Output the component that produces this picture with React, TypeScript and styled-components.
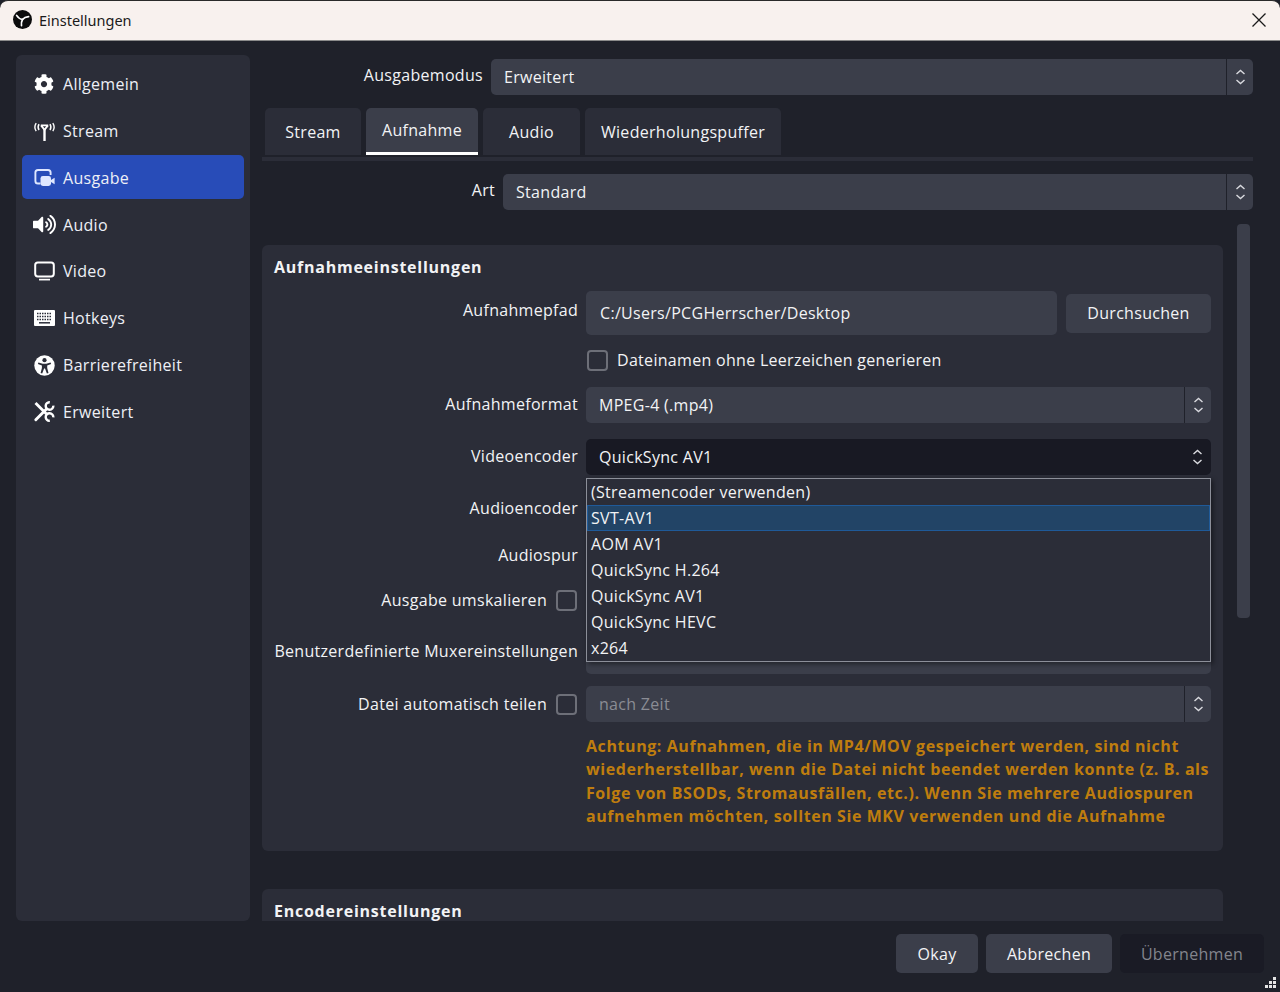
import React from 'react';
import styled, { createGlobalStyle } from 'styled-components';
import { FaCog, FaVolumeUp } from 'react-icons/fa';

const GlobalStyle = createGlobalStyle`
    html, body {
        margin: 0;
        padding: 0;
        background: #1f212a;
    }
    * {
        box-sizing: border-box;
    }
`;

const Window = styled.div`
    width: 1280px;
    height: 992px;
    display: flex;
    flex-direction: column;
    position: relative;
    overflow: hidden;
    background: #1f212a;
    color: #f2f3f5;
    font-family: "Open Sans", "Noto Sans", sans-serif;
    font-size: 16px;
    letter-spacing: 0.3px;
`;

const TitleBar = styled.div`
    height: 41px;
    flex: none;
    display: flex;
    align-items: center;
    padding: 0 13px 2px 13px;
    background: #f8f1ee;
    border-top: 1px solid #2a2a2a;
    border-bottom: 1px solid #8b8b8b;
    border-radius: 8px 8px 0 0;
    color: #1a1a1a;
    font-family: "Noto Sans", "Open Sans", sans-serif;
    font-size: 14.5px;
    letter-spacing: 0;
`;

const TitleText = styled.span`
    margin-left: 7px;
    flex: 1;
`;

const Content = styled.div`
    flex: 1;
    min-height: 0;
    display: flex;
    gap: 12px;
    padding: 14px 27px 0 16px;
`;

const Sidebar = styled.div`
    width: 234px;
    height: 866px;
    flex: none;
    display: flex;
    flex-direction: column;
    gap: 2.85px;
    padding: 6.5px 6px;
    background: #2b2d38;
    border-radius: 6px;
`;

const NavItem = styled.div<{ $active?: boolean }>`
    height: 44px;
    flex: none;
    display: flex;
    align-items: center;
    gap: 9px;
    padding: 1px 0 0 12px;
    border-radius: 5px;
    background: ${(p) => (p.$active ? '#284cb8' : 'transparent')};
    color: #eef0f6;
`;

const NavIcon = styled.span`
    width: 20px;
    height: 20px;
    flex: none;
    display: flex;
    align-items: center;
    justify-content: center;
    color: #fff;

    svg {
        flex: none;
    }
`;

const Main = styled.div`
    flex: 1;
    min-width: 0;
    height: 866px;
    display: flex;
    flex-direction: column;
`;

const TopRow = styled.div`
    height: 36px;
    flex: none;
    display: flex;
    align-items: center;
    gap: 8px;
    margin-top: 4px;
`;

const TopLabel = styled.div<{ $width: number }>`
    width: ${(p) => p.$width}px;
    flex: none;
    text-align: right;
    margin-top: -5px;
`;

const Select = styled.div<{ $open?: boolean; $disabled?: boolean }>`
    flex: 1;
    min-width: 0;
    height: 36px;
    display: flex;
    align-items: center;
    border-radius: 5px;
    background: ${(p) => (p.$open ? '#181923' : '#3b3e4a')};
    color: ${(p) => (p.$disabled ? '#8a8c94' : '#f2f3f5')};
`;

const SelectText = styled.div`
    flex: 1;
    padding-left: 13px;
    white-space: nowrap;
`;

const SelectArrows = styled.div<{ $open?: boolean }>`
    width: 27px;
    height: 100%;
    flex: none;
    display: flex;
    align-items: center;
    justify-content: center;
    border-left: ${(p) => (p.$open ? 'none' : '1px solid #1f212a')};
`;

const TabBar = styled.div`
    height: 53px;
    flex: none;
    display: flex;
    padding-left: 3px;
    margin-top: 13px;
    border-bottom: 4px solid #2b2d38;
`;

const Tab = styled.div<{ $active?: boolean; $width: number }>`
    width: ${(p) => p.$width}px;
    height: 47px;
    margin-right: 5px;
    display: flex;
    align-items: center;
    justify-content: center;
    border-radius: 5px 5px 0 0;
    background: ${(p) => (p.$active ? '#3b3e4a' : '#2b2d38')};
    border-bottom: ${(p) => (p.$active ? '3px solid #fff' : 'none')};
`;

const ArtRow = styled(TopRow)`
    margin-top: 13px;
`;

const ScrollArea = styled.div`
    flex: 1;
    min-height: 0;
    display: flex;
    gap: 14px;
    margin-top: 14px;
    overflow: hidden;
`;

const ScrollContent = styled.div`
    flex: 1;
    min-width: 0;
    padding-top: 21px;
`;

const ScrollTrack = styled.div`
    width: 13px;
    flex: none;
    margin-right: 3px;
`;

const ScrollThumb = styled.div`
    height: 394px;
    background: #3b3e4a;
    border-radius: 4px;
`;

const Group = styled.div`
    position: relative;
    height: 606px;
    padding: 12px 12px 0;
    background: #2b2d38;
    border-radius: 6px;
`;

const EncoderGroup = styled(Group)`
    height: 120px;
    margin-top: 38px;
`;

const GroupTitle = styled.div`
    height: 21px;
    line-height: 21px;
    font-weight: 700;
    font-size: 16px;
    letter-spacing: 0.75px;
`;

const Row = styled.div<{ $height: number; $top: number }>`
    height: ${(p) => p.$height}px;
    margin-top: ${(p) => p.$top}px;
    display: flex;
    align-items: center;
    gap: 8px;
`;

const Label = styled.div`
    width: 304px;
    flex: none;
    text-align: right;
    white-space: nowrap;
    margin-top: -3px;
`;

const PathLabel = styled(Label)`
    margin-top: -7px;
`;

const CheckLabel = styled.div`
    width: 304px;
    flex: none;
    display: flex;
    align-items: center;
    justify-content: flex-end;
    gap: 9px;
    white-space: nowrap;
    padding-right: 1px;
`;

const Field = styled.div`
    flex: 1;
    min-width: 0;
    display: flex;
    align-items: center;
    gap: 9px;
`;

const TextInput = styled.div`
    flex: 1;
    height: 44px;
    display: flex;
    align-items: center;
    padding-left: 14px;
    background: #3b3e4a;
    border-radius: 5px;
`;

const Button = styled.div<{ $width: number; $disabled?: boolean }>`
    width: ${(p) => p.$width}px;
    height: 39px;
    flex: none;
    display: flex;
    align-items: center;
    justify-content: center;
    border-radius: 5px;
    background: ${(p) => (p.$disabled ? '#1a1b25' : '#3b3e4a')};
    color: ${(p) => (p.$disabled ? '#83858d' : '#f2f3f5')};
`;

const Checkbox = styled.span`
    width: 21px;
    height: 21px;
    flex: none;
    border: 2px solid #6d6f78;
    border-radius: 4px;
`;

const FieldCheckbox = styled(Checkbox)`
    margin-left: 1px;
`;

const EmptyBar = styled.div`
    flex: 1;
    height: 100%;
    background: #3b3e4a;
    border-radius: 5px;
`;

const Warning = styled.div`
    margin: 13px 0 0 312px;
    color: #bf7d0e;
    font-weight: 700;
    font-size: 16px;
    letter-spacing: 0.58px;
    line-height: 23.4px;
    height: 94px;
    overflow: hidden;
    white-space: pre-line;
`;

const Popup = styled.div`
    position: absolute;
    left: 324px;
    top: 233px;
    width: 625px;
    height: 184px;
    background: #2b2d38;
    border: 1px solid #8c8f99;
    box-shadow: 2px 2px 5px rgba(0, 0, 0, 0.45);
`;

const PopupItem = styled.div<{ $active?: boolean }>`
    height: 26px;
    display: flex;
    align-items: center;
    padding-left: 4px;
    background: ${(p) => (p.$active ? '#224466' : 'transparent')};
    outline: ${(p) => (p.$active ? '1px solid #1f5a99' : 'none')};
    outline-offset: -1px;
`;

const Footer = styled.div`
    height: 71px;
    flex: none;
    display: flex;
    justify-content: flex-end;
    gap: 8px;
    padding: 13px 16px 0 0;
`;

const GripWrap = styled.div`
    position: absolute;
    right: 4px;
    bottom: 4px;
    width: 11px;
    height: 11px;
    line-height: 0;
`;

const ObsLogo = () => (
    <svg width="19" height="19" viewBox="0 0 19 19">
        <circle cx="9.5" cy="9.5" r="9.5" fill="#0c0c0c" />
        <path d="M3.6 5.4c1.6 2.6 3.4 3.7 5.9 4.1" stroke="#fff" strokeWidth="1.7" fill="none" strokeLinecap="round" />
        <path d="M15.6 6.6c-2.7.3-4.6 1.1-6.1 2.9" stroke="#fff" strokeWidth="1.7" fill="none" strokeLinecap="round" />
        <path d="M8.5 15.6c-.3-2.4 0-4.3 1-6.1" stroke="#fff" strokeWidth="1.7" fill="none" strokeLinecap="round" />
    </svg>
);

const CloseIcon = () => (
    <svg width="16" height="16" viewBox="0 0 16 16">
        <path d="M1.5 1.5l13 13M14.5 1.5l-13 13" stroke="#1a1a1a" strokeWidth="1.3" fill="none" />
    </svg>
);

const ArrowsIcon = () => (
    <svg width="11" height="18" viewBox="0 0 11 18">
        <path d="M1.5 6l4-3.5 4 3.5M1.5 12l4 3.5 4-3.5" stroke="#d8d9de" strokeWidth="1.4" fill="none" />
    </svg>
);

const StreamIcon = () => (
    <svg width="21" height="20" viewBox="0 0 21 20">
        <path d="M6.8 4.4h7.4M7 4.4l3.5 4.4 3.5-4.4" stroke="#fff" strokeWidth="1.8" fill="none" />
        <path d="M10.5 8v12" stroke="#fff" strokeWidth="2.4" />
        <path d="M5 3.2C3.9 5 3.9 7.2 5 9M16 3.2c1.1 1.8 1.1 4 0 5.8" stroke="#fff" strokeWidth="1.5" fill="none" />
        <path d="M2.2 2.2C.4 4.9.4 7.5 2.2 10.2M18.8 2.2c1.8 2.7 1.8 5.3 0 8" stroke="#fff" strokeWidth="1.4" fill="none" />
    </svg>
);

const OutputIcon = () => (
    <svg width="21" height="20" viewBox="0 0 21 20">
        <path d="M6.5 15.5H4a2.6 2.6 0 0 1-2.6-2.6V4.6A2.6 2.6 0 0 1 4 2h10a2.6 2.6 0 0 1 2.6 2.6V7" stroke="#dfe7ff" strokeWidth="1.9" fill="none" />
        <rect x="6.5" y="8" width="10.5" height="10" rx="2.4" fill="#dfe7ff" />
        <path d="M17 12l3.6-2.2v6.4L17 14z" fill="#dfe7ff" />
    </svg>
);

const MonitorIcon = () => (
    <svg width="21" height="20" viewBox="0 0 21 20">
        <rect x="1.2" y="1.4" width="18.6" height="14" rx="2.6" stroke="#fff" strokeWidth="2" fill="none" />
        <path d="M5 18.6h11" stroke="#fff" strokeWidth="1.7" />
    </svg>
);

const KeyboardIcon = () => (
    <svg width="21" height="16" viewBox="0 0 21 16">
        <rect width="21" height="16" rx="1" fill="#fff" />
        <path d="M3 3.5h15M3 6.5h15M3 9.5h15" stroke="#2b2d38" strokeWidth="1.5" strokeDasharray="1.5 1" />
        <path d="M5 12.8h11" stroke="#2b2d38" strokeWidth="1.5" />
    </svg>
);

const AccessIcon = () => (
    <svg width="21" height="21" viewBox="0 0 21 21">
        <circle cx="10.5" cy="10.5" r="10.2" fill="#fff" />
        <circle cx="10.5" cy="5.2" r="2.1" fill="#2b2d38" />
        <path d="M4.4 7.6l4.3 1.1h3.6l4.3-1.1.5 1.5-3.9 1.4v2.6l1.3 4.9-1.6.4-1.9-4.9h-.9l-1.9 4.9-1.6-.4 1.3-4.9v-2.6L3.9 9.1z" fill="#2b2d38" />
    </svg>
);

const ToolsIcon = () => (
    <svg width="22" height="21" viewBox="0 0 22 21">
        <path d="M2.5 2l11 11" stroke="#fff" strokeWidth="2.8" fill="none" />
        <path d="M13.5 8L2.8 18.7" stroke="#fff" strokeWidth="2.9" fill="none" strokeLinecap="round" />
        <path d="M20.3 4.7A3.8 3.8 0 1 1 16.8 1.2" stroke="#fff" strokeWidth="2.4" fill="none" />
        <path d="M16.8 19.8A3.8 3.8 0 1 1 20.3 16.3" stroke="#fff" strokeWidth="2.4" fill="none" />
    </svg>
);

const GripIcon = () => (
    <svg width="11" height="11" viewBox="0 0 11 11" fill="#e4e4e4">
        <rect x="8" y="0" width="3" height="3" />
        <rect x="4" y="4" width="3" height="3" />
        <rect x="8" y="4" width="3" height="3" />
        <rect x="0" y="8" width="3" height="3" />
        <rect x="4" y="8" width="3" height="3" />
        <rect x="8" y="8" width="3" height="3" />
    </svg>
);

const navItems = [
    { label: 'Allgemein', icon: <FaCog size={20} /> },
    { label: 'Stream', icon: <StreamIcon /> },
    { label: 'Ausgabe', icon: <OutputIcon />, active: true },
    { label: 'Audio', icon: <FaVolumeUp size={23} /> },
    { label: 'Video', icon: <MonitorIcon /> },
    { label: 'Hotkeys', icon: <KeyboardIcon /> },
    { label: 'Barrierefreiheit', icon: <AccessIcon /> },
    { label: 'Erweitert', icon: <ToolsIcon /> },
];

const encoders = [
    '(Streamencoder verwenden)',
    'SVT-AV1',
    'AOM AV1',
    'QuickSync H.264',
    'QuickSync AV1',
    'QuickSync HEVC',
    'x264',
];

const warningText = `Achtung: Aufnahmen, die in MP4/MOV gespeichert werden, sind nicht
wiederherstellbar, wenn die Datei nicht beendet werden konnte (z. B. als
Folge von BSODs, Stromausfällen, etc.). Wenn Sie mehrere Audiospuren
aufnehmen möchten, sollten Sie MKV verwenden und die Aufnahme`;

const App: React.FC = () => {
    return (
        <Window>
            <GlobalStyle />
            <TitleBar>
                <ObsLogo />
                <TitleText>Einstellungen</TitleText>
                <CloseIcon />
            </TitleBar>
            <Content>
                <Sidebar>
                    {navItems.map((item) => (
                        <NavItem key={item.label} $active={item.active}>
                            <NavIcon>{item.icon}</NavIcon>
                            {item.label}
                        </NavItem>
                    ))}
                </Sidebar>
                <Main>
                    <TopRow>
                        <TopLabel $width={221}>Ausgabemodus</TopLabel>
                        <Select>
                            <SelectText>Erweitert</SelectText>
                            <SelectArrows><ArrowsIcon /></SelectArrows>
                        </Select>
                    </TopRow>
                    <TabBar>
                        <Tab $width={96}>Stream</Tab>
                        <Tab $active $width={112}>Aufnahme</Tab>
                        <Tab $width={97}>Audio</Tab>
                        <Tab $width={196}>Wiederholungspuffer</Tab>
                    </TabBar>
                    <ArtRow>
                        <TopLabel $width={233}>Art</TopLabel>
                        <Select>
                            <SelectText>Standard</SelectText>
                            <SelectArrows><ArrowsIcon /></SelectArrows>
                        </Select>
                    </ArtRow>
                    <ScrollArea>
                        <ScrollContent>
                            <Group>
                                <GroupTitle>Aufnahmeeinstellungen</GroupTitle>
                                <Row $height={44} $top={13}>
                                    <PathLabel>Aufnahmepfad</PathLabel>
                                    <Field>
                                        <TextInput>C:/Users/PCGHerrscher/Desktop</TextInput>
                                        <Button $width={145}>Durchsuchen</Button>
                                    </Field>
                                </Row>
                                <Row $height={22} $top={14}>
                                    <Label />
                                    <Field>
                                        <FieldCheckbox />
                                        Dateinamen ohne Leerzeichen generieren
                                    </Field>
                                </Row>
                                <Row $height={36} $top={16}>
                                    <Label>Aufnahmeformat</Label>
                                    <Select>
                                        <SelectText>MPEG-4 (.mp4)</SelectText>
                                        <SelectArrows><ArrowsIcon /></SelectArrows>
                                    </Select>
                                </Row>
                                <Row $height={36} $top={16}>
                                    <Label>Videoencoder</Label>
                                    <Select $open>
                                        <SelectText>QuickSync AV1</SelectText>
                                        <SelectArrows $open><ArrowsIcon /></SelectArrows>
                                    </Select>
                                </Row>
                                <Row $height={36} $top={16}>
                                    <Label>Audioencoder</Label>
                                    <EmptyBar />
                                </Row>
                                <Row $height={36} $top={11}>
                                    <Label>Audiospur</Label>
                                    <EmptyBar />
                                </Row>
                                <Row $height={36} $top={8}>
                                    <CheckLabel>
                                        Ausgabe umskalieren
                                        <Checkbox />
                                    </CheckLabel>
                                    <EmptyBar />
                                </Row>
                                <Row $height={44} $top={12}>
                                    <Label>Benutzerdefinierte Muxereinstellungen</Label>
                                    <EmptyBar />
                                </Row>
                                <Row $height={36} $top={12}>
                                    <CheckLabel>
                                        Datei automatisch teilen
                                        <Checkbox />
                                    </CheckLabel>
                                    <Select $disabled>
                                        <SelectText>nach Zeit</SelectText>
                                        <SelectArrows><ArrowsIcon /></SelectArrows>
                                    </Select>
                                </Row>
                                <Warning>{warningText}</Warning>
                                <Popup>
                                    {encoders.map((name) => (
                                        <PopupItem key={name} $active={name === 'SVT-AV1'}>
                                            {name}
                                        </PopupItem>
                                    ))}
                                </Popup>
                            </Group>
                            <EncoderGroup>
                                <GroupTitle>Encodereinstellungen</GroupTitle>
                            </EncoderGroup>
                        </ScrollContent>
                        <ScrollTrack>
                            <ScrollThumb />
                        </ScrollTrack>
                    </ScrollArea>
                </Main>
            </Content>
            <Footer>
                <Button $width={82}>Okay</Button>
                <Button $width={126}>Abbrechen</Button>
                <Button $width={144} $disabled>Übernehmen</Button>
            </Footer>
            <GripWrap>
                <GripIcon />
            </GripWrap>
        </Window>
    );
};

export default App;
